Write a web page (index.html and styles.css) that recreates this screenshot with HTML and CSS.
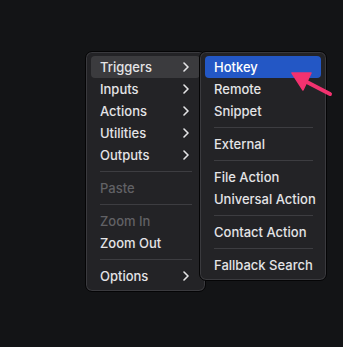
FILE: index.html
```html
<!DOCTYPE html>
<html lang="en">
<head>
  <meta charset="UTF-8" />
  <title>Context Menu</title>
  <link rel="stylesheet" href="styles.css">
</head>
<body>
  <div class="stage">
    <div class="menu main-menu">
      <div class="item active">Triggers <svg class="chev" viewBox="0 0 6 10"><polyline points="1,1 5,5 1,9"/></svg></div>
      <div class="item">Inputs <svg class="chev" viewBox="0 0 6 10"><polyline points="1,1 5,5 1,9"/></svg></div>
      <div class="item">Actions <svg class="chev" viewBox="0 0 6 10"><polyline points="1,1 5,5 1,9"/></svg></div>
      <div class="item">Utilities <svg class="chev" viewBox="0 0 6 10"><polyline points="1,1 5,5 1,9"/></svg></div>
      <div class="item">Outputs <svg class="chev" viewBox="0 0 6 10"><polyline points="1,1 5,5 1,9"/></svg></div>
      <div class="sep"></div>
      <div class="item disabled">Paste</div>
      <div class="sep"></div>
      <div class="item disabled">Zoom In</div>
      <div class="item">Zoom Out</div>
      <div class="sep"></div>
      <div class="item">Options <svg class="chev" viewBox="0 0 6 10"><polyline points="1,1 5,5 1,9"/></svg></div>
    </div>

    <div class="menu sub-menu">
      <div class="item selected">Hotkey</div>
      <div class="item">Remote</div>
      <div class="item">Snippet</div>
      <div class="sep"></div>
      <div class="item">External</div>
      <div class="sep"></div>
      <div class="item">File Action</div>
      <div class="item">Universal Action</div>
      <div class="sep"></div>
      <div class="item">Contact Action</div>
      <div class="sep"></div>
      <div class="item">Fallback Search</div>
    </div>
  </div>

  <!-- pointer arrow annotation -->
  <svg class="pointer" viewBox="0 0 343 347">
    <line x1="301" y1="79" x2="330" y2="94" />
    <polygon points="292,73 311,73 303,90" />
  </svg>
</body>
</html>
```

FILE: styles.css
```css
body {
  margin: 0;
  width: 343px;
  height: 347px;
  background: #131416;
  font-family: Inter, "Noto Sans", sans-serif;
  overflow: hidden;
  position: relative;
}

.stage {
  display: flex;
  align-items: flex-start;
  padding: 51px 0 0 85px;
}

.menu {
  background: #232326;
  border: 1px solid #050506;
  box-shadow: inset 0 0 0 1px #3a3a3e;
  border-radius: 7px;
  padding: 4px 5px;
  display: flex;
  flex-direction: column;
}

.main-menu {
  width: 109px;
}

.sub-menu {
  width: 116px;
  margin-left: -7px;
  position: relative;
  z-index: 1;
}

.item {
  height: 22px;
  display: flex;
  align-items: center;
  justify-content: space-between;
  padding: 0 9px;
  color: #e4e4e6;
  font-size: 13px;
  font-weight: 500;
  border-radius: 4px;
  white-space: nowrap;
}

.item.active {
  background: #3b3b3e;
}

.item.selected {
  background: #2357c5;
  color: #fff;
}

.item.disabled {
  color: #616165;
}

.chev {
  width: 6px;
  height: 10px;
  margin-right: 2px;
  fill: none;
  stroke: #e4e4e6;
  stroke-width: 1.6;
  stroke-linecap: round;
  stroke-linejoin: round;
}

.sep {
  height: 1px;
  background: #3d3d41;
  margin: 5px 8px 5px 9px;
}

.pointer {
  position: absolute;
  left: 0;
  top: 0;
  width: 343px;
  height: 347px;
  z-index: 5;
  pointer-events: none;
}

.pointer line {
  stroke: #f2326f;
  stroke-width: 4;
  stroke-linecap: round;
}

.pointer polygon {
  fill: #f2326f;
  stroke: #f2326f;
  stroke-width: 1.5;
  stroke-linejoin: round;
}
```
